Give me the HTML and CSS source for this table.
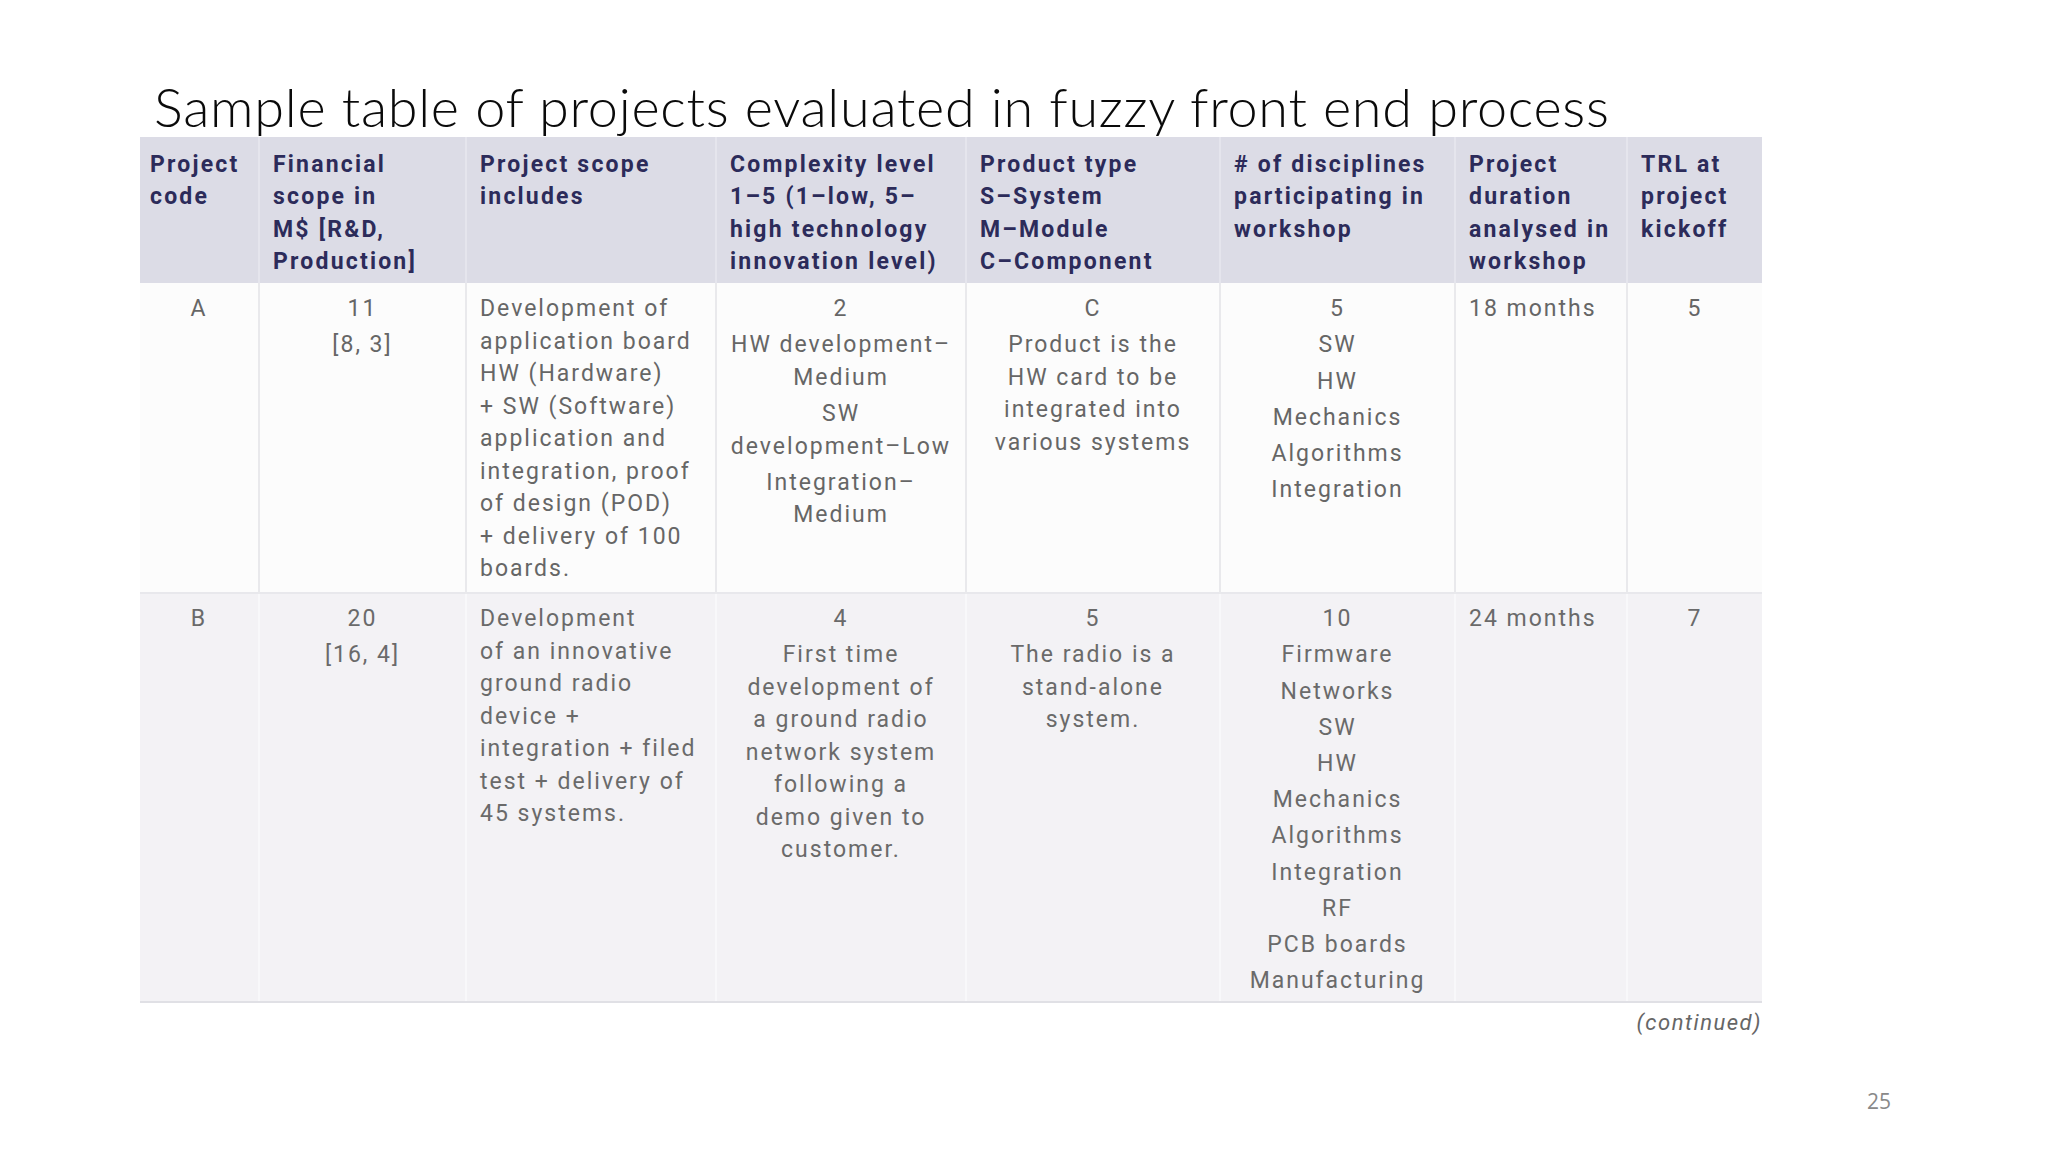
FILE: index.html
```html
<!DOCTYPE html>
<html lang="en">
<head>
<meta charset="utf-8">
<title>Sample table of projects evaluated in fuzzy front end process</title>
<link rel="stylesheet" href="styles.css">
</head>
<body>
<main class="slide">
  <h1 class="title">Sample table of projects evaluated in fuzzy front end process</h1>
  <table class="projects">
    <colgroup>
      <col class="c-code"><col class="c-fin"><col class="c-scope"><col class="c-cx"><col class="c-type"><col class="c-disc"><col class="c-dur"><col class="c-trl">
    </colgroup>
    <thead>
      <tr>
        <th class="first">Project<br>code</th>
        <th>Financial<br>scope in<br>M$ [R&amp;D,<br>Production]</th>
        <th>Project scope<br>includes</th>
        <th>Complexity level<br>1–5 (1–low, 5–<br>high technology<br>innovation level)</th>
        <th>Product type<br>S–System<br>M–Module<br>C–Component</th>
        <th># of disciplines<br>participating in<br>workshop</th>
        <th>Project<br>duration<br>analysed in<br>workshop</th>
        <th>TRL at<br>project<br>kickoff</th>
      </tr>
    </thead>
    <tbody>
      <tr class="row-a">
        <td class="ctr first"><p>A</p></td>
        <td class="ctr"><p>11</p><p>[8, 3]</p></td>
        <td><p>Development of<br>application board<br>HW (Hardware)<br>+ SW (Software)<br>application and<br>integration, proof<br>of design (POD)<br>+ delivery of 100<br>boards.</p></td>
        <td class="ctr"><p>2</p><p>HW development–<br>Medium</p><p>SW<br>development–Low</p><p>Integration–<br>Medium</p></td>
        <td class="ctr"><p>C</p><p>Product is the<br>HW card to be<br>integrated into<br>various systems</p></td>
        <td class="ctr"><p>5</p><p>SW</p><p>HW</p><p>Mechanics</p><p>Algorithms</p><p>Integration</p></td>
        <td><p>18 months</p></td>
        <td class="ctr"><p>5</p></td>
      </tr>
      <tr class="row-b">
        <td class="ctr first"><p>B</p></td>
        <td class="ctr"><p>20</p><p>[16, 4]</p></td>
        <td><p>Development<br>of an innovative<br>ground radio<br>device +<br>integration + filed<br>test + delivery of<br>45 systems.</p></td>
        <td class="ctr"><p>4</p><p>First time<br>development of<br>a ground radio<br>network system<br>following a<br>demo given to<br>customer.</p></td>
        <td class="ctr"><p>5</p><p>The radio is a<br>stand-alone<br>system.</p></td>
        <td class="ctr"><p>10</p><p>Firmware</p><p>Networks</p><p>SW</p><p>HW</p><p>Mechanics</p><p>Algorithms</p><p>Integration</p><p>RF</p><p>PCB boards</p><p>Manufacturing</p></td>
        <td><p>24 months</p></td>
        <td class="ctr"><p>7</p></td>
      </tr>
    </tbody>
  </table>
  <p class="continued">(continued)</p>
  <p class="page-num">25</p>
</main>
</body>
</html>
```

FILE: styles.css
```css
* {
  box-sizing: border-box;
}

html,
body {
  margin: 0;
  padding: 0;
  background: #ffffff;
}

.slide {
  width: 2048px;
  height: 1152px;
  padding: 79px 157px 0 140px;
  display: flex;
  flex-direction: column;
  overflow: hidden;
}

.title {
  margin: 0 0 2px 14px;
  font-family: Lato, "Open Sans", sans-serif;
  font-weight: 300;
  font-size: 54px;
  line-height: 56px;
  letter-spacing: 0.72px;
  color: #0a0a0a;
  white-space: nowrap;
}

.projects {
  width: 1622px;
  table-layout: fixed;
  border-collapse: collapse;
  font-family: Roboto, "Liberation Sans", sans-serif;
  font-size: 23px;
}

.c-code { width: 119px; }
.c-fin { width: 207px; }
.c-scope { width: 250px; }
.c-cx { width: 250px; }
.c-type { width: 254px; }
.c-disc { width: 235px; }
.c-dur { width: 172px; }
.c-trl { width: 135px; }

.projects thead tr {
  height: 145px;
}

.projects th {
  background: #dcdce6;
  color: #2c2b5a;
  font-weight: 700;
  line-height: 32.3px;
  letter-spacing: 2.2px;
  text-align: left;
  vertical-align: top;
  padding: 12px 4px 5px 13px;
  border-left: 2px solid #e5e5ed;
  white-space: nowrap;
}

.projects th.first {
  border-left: none;
  padding-left: 10px;
}

.projects td {
  color: #666666;
  font-weight: 400;
  line-height: 32.5px;
  letter-spacing: 2px;
  text-align: left;
  vertical-align: top;
  padding: 10px 4px 0 13px;
  white-space: nowrap;
}

.projects td.ctr {
  text-align: center;
  padding-left: 6px;
  padding-right: 6px;
}

.projects td p {
  margin: 0 0 3.7px;
}

.row-a {
  height: 310px;
}

.row-a td {
  background: #fcfcfc;
  border-left: 2px solid #e9e9ec;
}

.row-b {
  height: 408px;
}

.row-b td {
  background: #f3f2f5;
  color: #6a6a6a;
  padding-top: 9px;
  border-left: 2px solid #f8f8fa;
  border-top: 2px solid #e8e8ec;
  border-bottom: 2px solid #e0e0e5;
}

.projects td.first {
  border-left: none;
}

.continued {
  width: 1622px;
  margin: 4px 0 0;
  text-align: right;
  font-family: Roboto, "Liberation Sans", sans-serif;
  font-style: italic;
  font-size: 22px;
  line-height: 32px;
  letter-spacing: 1.5px;
  color: #666666;
}

.page-num {
  align-self: flex-end;
  margin: 50px 0 0;
  font-family: "Open Sans", sans-serif;
  font-size: 21px;
  line-height: 24px;
  color: #898989;
}
```
